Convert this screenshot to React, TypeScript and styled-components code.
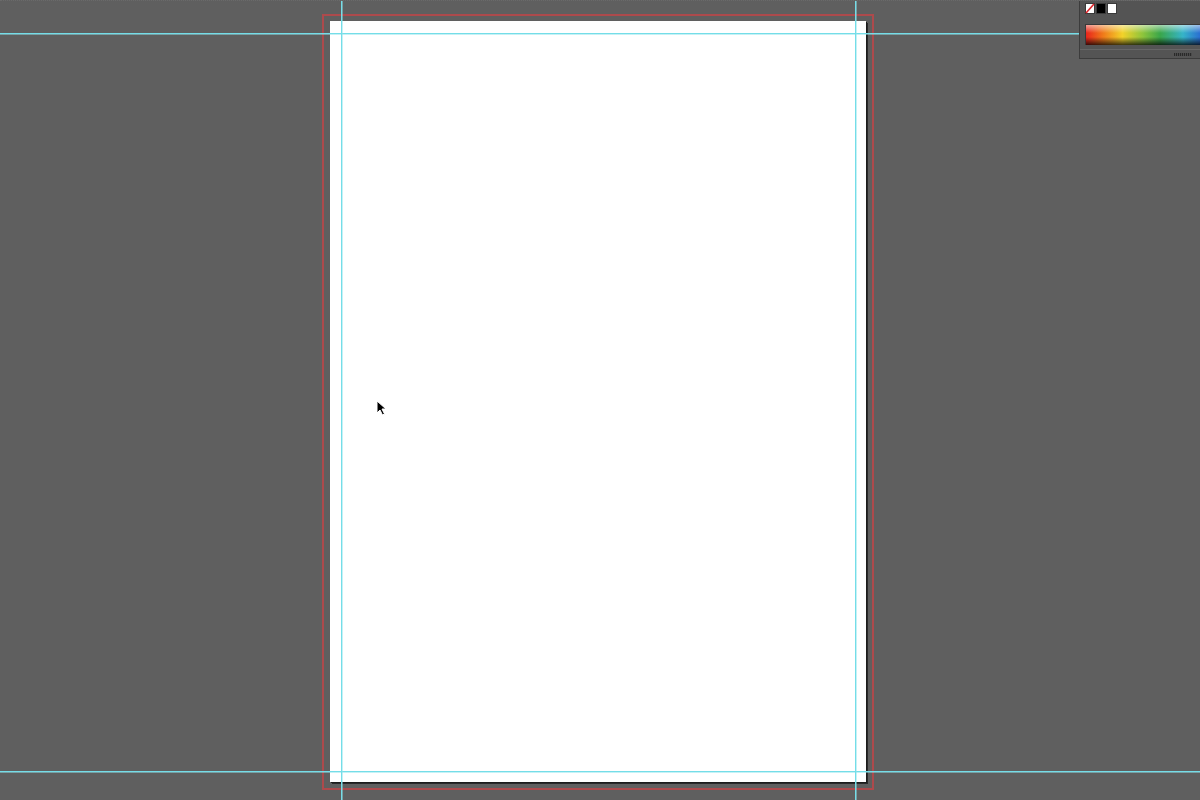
import styled, { createGlobalStyle } from "styled-components";

const GlobalStyle = createGlobalStyle`
  html, body {
    margin: 0;
    padding: 0;
    background: #5f5f5f;
    font-family: "Liberation Sans", Arial, sans-serif;
  }
`;

const Canvas = styled.div`
  position: relative;
  width: 1200px;
  height: 800px;
  overflow: hidden;
  background: #5f5f5f;
  border-top: 1px dotted #6a6a6a;
  box-sizing: border-box;
  display: flex;
  align-items: flex-start;
  padding: 13px 0 0 322px;
`;

const Bleed = styled.div`
  border: 2px solid #ad4a4c;
  padding: 5px 6px 6px 6px;
`;

const Page = styled.div`
  width: 536px;
  height: 761px;
  background: #ffffff;
  box-shadow: 1px 1px 0 #1c1c1c, 2px 2px 0 #2a2a2a;
`;

// guides are drawn 2px wide so their tint survives like the blurred originals
const HGuide = styled.div<{ $top: number }>`
  position: absolute;
  left: 0;
  right: 0;
  top: ${(p) => p.$top}px;
  height: 2px;
  background: linear-gradient(to bottom, #74dde8 0 50%, rgba(140, 228, 236, 0.5) 50% 100%);
`;

const VGuide = styled.div<{ $left: number }>`
  position: absolute;
  top: 0;
  bottom: 0;
  left: ${(p) => p.$left}px;
  width: 2px;
  background: linear-gradient(to right, #74dde8 0 50%, rgba(140, 228, 236, 0.5) 50% 100%);
`;

const Cursor = styled.svg`
  position: absolute;
  left: 376px;
  top: 399px;
`;

const Panel = styled.div`
  position: absolute;
  top: -1px;
  right: 0;
  width: 121px;
  height: 59px;
  background: #545454;
  border-left: 1px solid #3c3c3c;
  border-bottom: 1px solid #3c3c3c;
  display: flex;
  flex-direction: column;
  box-sizing: border-box;
`;

const SwatchRow = styled.div`
  display: flex;
  gap: 1px;
  padding: 3px 0 0 5px;
  height: 12px;
`;

const Swatch = styled.div<{ $color: string }>`
  width: 10px;
  height: 11px;
  background: ${(p) => p.$color};
  border: 1px solid #3a3a3a;
  box-sizing: border-box;
`;

const NoneSwatch = styled.svg`
  display: block;
`;

const Spectrum = styled.div`
  margin: 9px 0 0 5px;
  height: 20px;
  border-left: 1px solid #3a3a3a;
  border-top: 1px solid #3a3a3a;
  background: linear-gradient(
      to bottom,
      rgba(255, 255, 255, 0.55) 0%,
      rgba(255, 255, 255, 0) 40%,
      rgba(0, 0, 0, 0) 60%,
      rgba(0, 0, 0, 0.75) 100%
    ),
    linear-gradient(
      to right,
      #e8241c 0%,
      #f07a1a 15%,
      #f2d22a 32%,
      #8cc43c 50%,
      #3aa64a 65%,
      #36b4c8 85%,
      #2a6fd2 100%
    );
`;

const Footer = styled.div`
  margin-top: auto;
  height: 8px;
  border-top: 1px solid #676767;
  display: flex;
  justify-content: flex-end;
  align-items: center;
  padding-right: 8px;
`;

const Grip = styled.div`
  width: 18px;
  height: 3px;
  background: repeating-linear-gradient(
    to right,
    #2a2a2a 0,
    #2a2a2a 1px,
    #4a4a4a 1px,
    #4a4a4a 2px
  );
`;

export default function App() {
  return (
    <>
      <GlobalStyle />
      <Canvas>
        <Bleed>
          <Page />
        </Bleed>
        <HGuide $top={32} />
        <HGuide $top={770} />
        <VGuide $left={341} />
        <VGuide $left={855} />
        <Cursor width="12" height="17" viewBox="0 0 12 17">
          <path
            d="M1 1 L1 13 L4 10 L6.5 15 L8.5 14 L6 9 L10 9 Z"
            fill="#000"
            stroke="#fff"
            strokeWidth="1"
          />
        </Cursor>
        <Panel>
          <SwatchRow>
            <NoneSwatch width="10" height="11" viewBox="0 0 10 11">
              <rect x="0.5" y="0.5" width="9" height="10" fill="#fff" stroke="#3a3a3a" />
              <line x1="1" y1="10" x2="9" y2="1" stroke="#e0242a" strokeWidth="1.6" />
            </NoneSwatch>
            <Swatch $color="#000000" />
            <Swatch $color="#ffffff" />
          </SwatchRow>
          <Spectrum />
          <Footer>
            <Grip />
          </Footer>
        </Panel>
      </Canvas>
    </>
  );
}
